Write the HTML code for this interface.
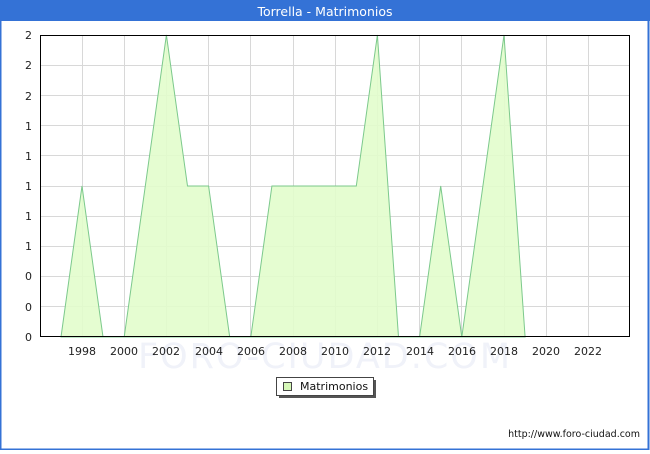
<!DOCTYPE html>
<html><head><meta charset="utf-8"><style>
body{margin:0;width:650px;height:450px;overflow:hidden;background:#fff;font-family:"DejaVu Sans","Liberation Sans",sans-serif}
</style></head><body>
<svg width="650" height="450" xmlns="http://www.w3.org/2000/svg" font-family="DejaVu Sans, Liberation Sans, sans-serif">
<rect x="0" y="0" width="650" height="450" fill="#fff"/>
<rect x="0.5" y="0.5" width="648" height="449" fill="none" stroke="#3472d6" stroke-width="2"/>
<rect x="0" y="0" width="650" height="21" fill="#3472d6"/>
<text x="325" y="16" fill="#fff" font-size="12.5" text-anchor="middle">Torrella - Matrimonios</text>
<text x="325" y="368" fill="#f0f2f9" font-size="35" text-anchor="middle" letter-spacing="2">FORO-CIUDAD.COM</text>
<g stroke="#d8d8d8" stroke-width="1">
<line x1="40" x2="630" y1="65.5" y2="65.5"/><line x1="40" x2="630" y1="95.5" y2="95.5"/><line x1="40" x2="630" y1="125.5" y2="125.5"/><line x1="40" x2="630" y1="155.5" y2="155.5"/><line x1="40" x2="630" y1="186.5" y2="186.5"/><line x1="40" x2="630" y1="216.5" y2="216.5"/><line x1="40" x2="630" y1="246.5" y2="246.5"/><line x1="40" x2="630" y1="276.5" y2="276.5"/><line x1="40" x2="630" y1="306.5" y2="306.5"/>
<line x1="82.5" x2="82.5" y1="35" y2="337"/><line x1="124.5" x2="124.5" y1="35" y2="337"/><line x1="166.5" x2="166.5" y1="35" y2="337"/><line x1="208.5" x2="208.5" y1="35" y2="337"/><line x1="250.5" x2="250.5" y1="35" y2="337"/><line x1="293.5" x2="293.5" y1="35" y2="337"/><line x1="335.5" x2="335.5" y1="35" y2="337"/><line x1="377.5" x2="377.5" y1="35" y2="337"/><line x1="419.5" x2="419.5" y1="35" y2="337"/><line x1="461.5" x2="461.5" y1="35" y2="337"/><line x1="504.5" x2="504.5" y1="35" y2="337"/><line x1="546.5" x2="546.5" y1="35" y2="337"/><line x1="588.5" x2="588.5" y1="35" y2="337"/>
</g>
<polygon points="61,337 82,186 103,337 124.2,337 166.4,35 187.5,186 208.6,186 229.7,337 250.8,337 271.9,186 356.3,186 377.4,35 398.5,337 419.6,337 440.7,186 461.8,337 504,35 525.1,337" fill="#e2fdcc" fill-opacity="0.9" stroke="#7cc98c" stroke-width="1"/>
<rect x="40.5" y="35.5" width="589" height="301" fill="none" stroke="#000" stroke-width="1"/>
<g font-size="11" fill="#222" text-anchor="end">
<text x="32" y="39">2</text><text x="32" y="69">2</text><text x="32" y="100">2</text><text x="32" y="130">1</text><text x="32" y="160">1</text><text x="32" y="190">1</text><text x="32" y="220">1</text><text x="32" y="250">1</text><text x="32" y="280">0</text><text x="32" y="311">0</text><text x="32" y="341">0</text>
</g>
<g font-size="11" fill="#222" text-anchor="middle">
<text x="82" y="355">1998</text><text x="124" y="355">2000</text><text x="166" y="355">2002</text><text x="209" y="355">2004</text><text x="251" y="355">2006</text><text x="293" y="355">2008</text><text x="335" y="355">2010</text><text x="377" y="355">2012</text><text x="420" y="355">2014</text><text x="462" y="355">2016</text><text x="504" y="355">2018</text><text x="546" y="355">2020</text><text x="588" y="355">2022</text>
</g>
<rect x="279" y="380" width="97" height="18" fill="#555"/>
<rect x="276.5" y="377.5" width="97" height="18" fill="#fff" stroke="#444"/>
<rect x="283.5" y="382.5" width="8" height="8" fill="#d6f8b8" stroke="#444"/>
<text x="300" y="390" font-size="11" fill="#111">Matrimonios</text>
<text x="640" y="437" font-size="9.5" fill="#111" text-anchor="end">http://www.foro-ciudad.com</text>
</svg>
</body></html>
